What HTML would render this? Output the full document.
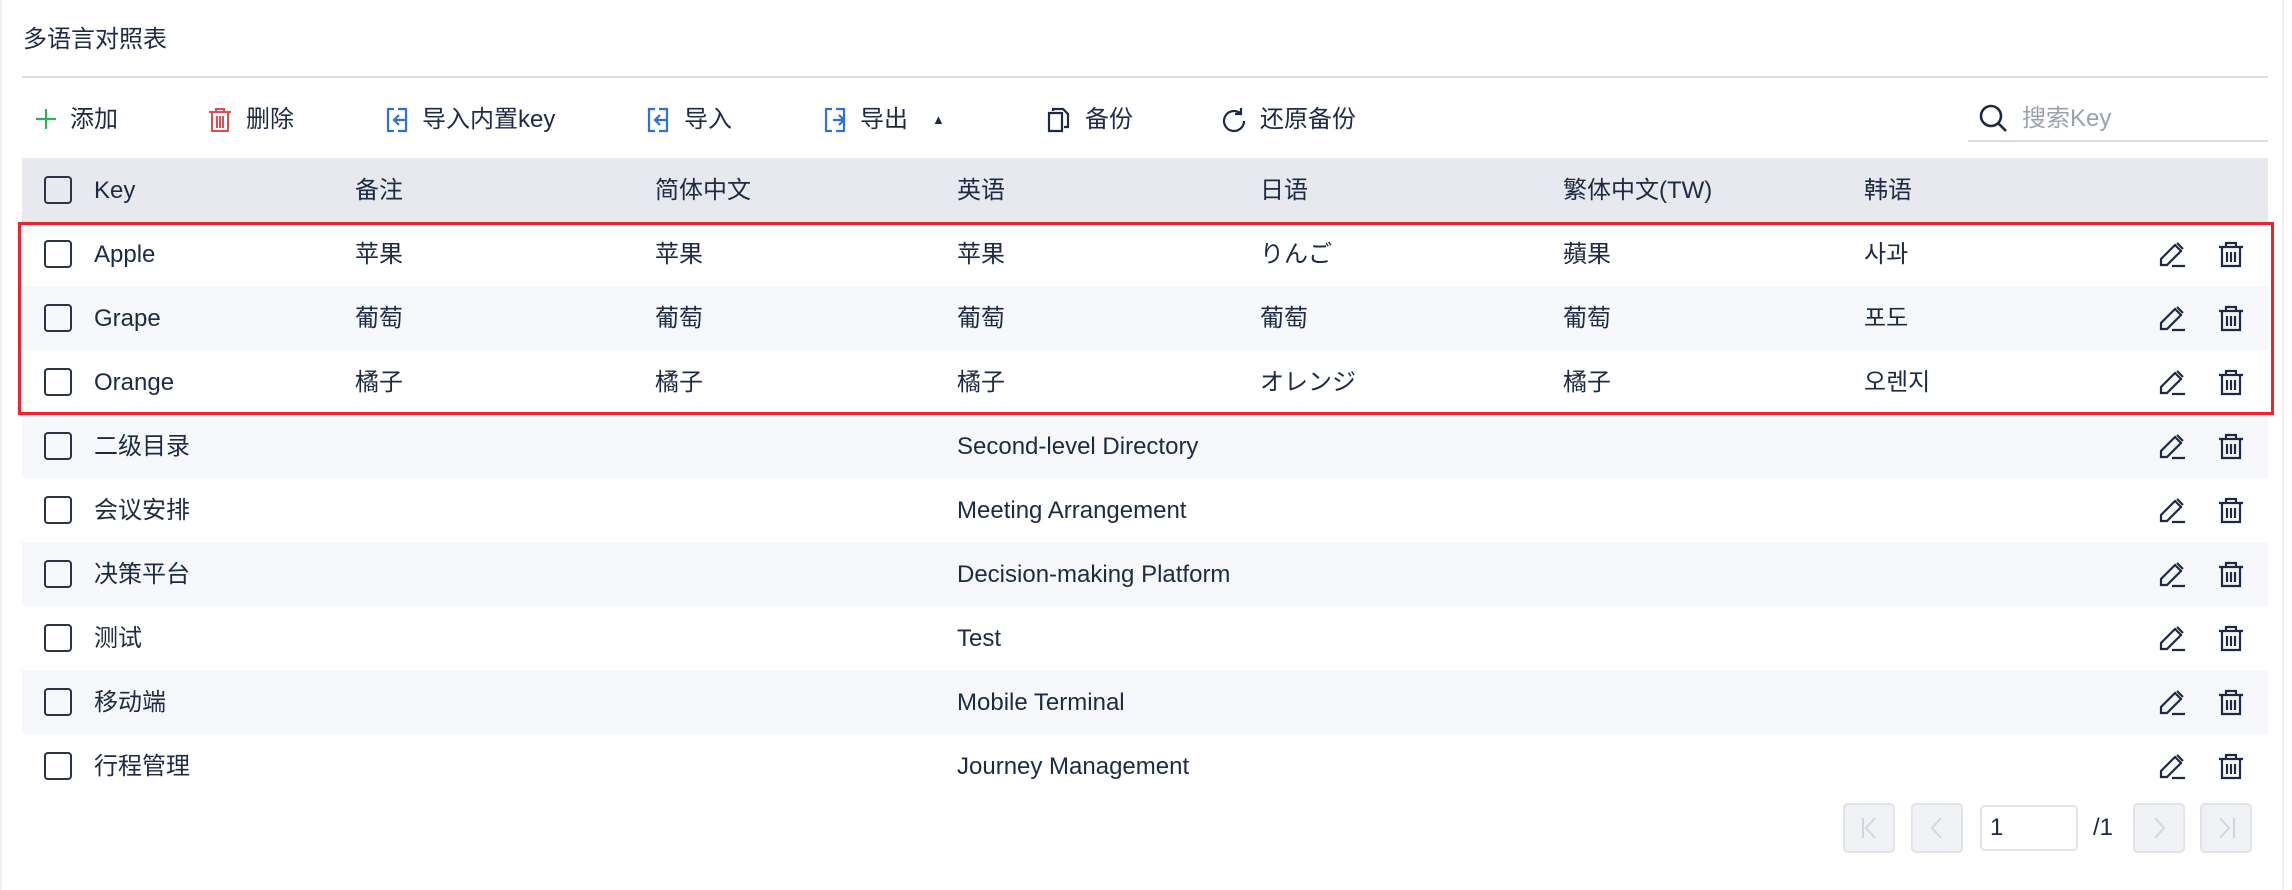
<!DOCTYPE html>
<html><head><meta charset="utf-8"><style>
*{box-sizing:border-box;margin:0;padding:0}
body{width:2292px;height:890px;background:#fff;font-family:"Liberation Sans","Noto Sans CJK SC",sans-serif;color:#1d2a44;font-size:24px;position:relative;overflow:hidden}
.abs{position:absolute}
.edge{position:absolute;top:0;bottom:0;width:2px;background:#eef0f4}
.title{left:23px;top:19px;font-size:24px}
.div{left:22px;top:76px;width:2246px;height:2px;background:#dcdde3}
.tb{top:104px;height:32px;line-height:32px;font-size:24px}
.tb svg{position:absolute;top:3px}
.search{left:1968px;top:100px;width:300px;height:42px;border-bottom:2px solid #dcdde3}
.head{left:22px;top:158px;width:2246px;height:64px;background:#e8e9ee}
.row{left:22px;width:2246px;height:64px}
.row.s{background:#f6f8fb}
.cb{position:absolute;left:22px;width:28px;height:28px;border:2px solid #2a3347;border-radius:4px}
.t{position:absolute;line-height:64px;top:1px;white-space:nowrap}
.ic{position:absolute;top:18px}
.red{left:18px;top:222px;width:2256px;height:193px;border:3px solid #f0232b}
.pb{top:803px;width:52px;height:50px;border:2px solid #e1e3ea;border-radius:5px;background:#f1f2f6}
</style></head><body>
<div class="edge" style="left:0"></div>
<div class="edge" style="left:2282px"></div>
<div class="abs title">多语言对照表</div>
<div class="abs div"></div>

<div class="abs tb" style="left:35px;width:30px"><svg width="22" height="24" viewBox="0 0 22 24"><path d="M11 2v20M1 12h20" stroke="#2fb35a" stroke-width="2.2"/></svg></div>
<div class="abs tb" style="left:70px">添加</div>
<div class="abs tb" style="left:207px;width:30px"><svg width="26" height="26" viewBox="0 0 26 26" fill="none" stroke="#e5484d" stroke-width="2"><path d="M2 5h22M9 5V2h8v3M5 5v19h16V5M10 9v12M13 9v12M16 9v12"/></svg></div>
<div class="abs tb" style="left:246px">删除</div>
<div class="abs tb" style="left:385px;width:30px"><svg width="28" height="26" viewBox="0 0 28 26" fill="none" stroke="#2f6fe0" stroke-width="2.2"><path d="M9 2H3v22h6M13 2h8v22h-8M20 13h-10M14 8l-5 5 5 5"/></svg></div>
<div class="abs tb" style="left:422px">导入内置key</div>
<div class="abs tb" style="left:646px;width:30px"><svg width="28" height="26" viewBox="0 0 28 26" fill="none" stroke="#2f6fe0" stroke-width="2.2"><path d="M9 2H3v22h6M13 2h8v22h-8M20 13h-10M14 8l-5 5 5 5"/></svg></div>
<div class="abs tb" style="left:684px">导入</div>
<div class="abs tb" style="left:823px;width:30px"><svg width="28" height="26" viewBox="0 0 28 26" fill="none" stroke="#2f6fe0" stroke-width="2.2"><path d="M9 2H3v22h6M13 2h8v22h-8M10 13h10M16 8l5 5-5 5"/></svg></div>
<div class="abs tb" style="left:860px">导出</div>
<div class="abs tb" style="left:932px;font-size:13px">▲</div>
<div class="abs tb" style="left:1046px;width:30px"><svg width="26" height="26" viewBox="0 0 26 26" fill="none" stroke="#1d2a44" stroke-width="2.2"><path d="M7 4V2h10l5 5v13h-4M3 6h13v18H3z"/></svg></div>
<div class="abs tb" style="left:1085px">备份</div>
<div class="abs tb" style="left:1220px;width:30px"><svg width="28" height="28" viewBox="0 0 28 28" fill="none" stroke="#1d2a44" stroke-width="2.2"><path d="M24 14a10 10 0 1 1-4-8M21 1v6h-6"/></svg></div>
<div class="abs tb" style="left:1260px">还原备份</div>

<div class="abs search"><svg style="position:absolute;left:11px;top:4px" width="30" height="30" viewBox="0 0 30 30" fill="none" stroke="#1d2a44" stroke-width="2.6"><circle cx="12" cy="12" r="10"/><path d="M19 19l8 8"/></svg><span style="position:absolute;left:54px;top:-2px;color:#9aa1b1;font-size:24px">搜索Key</span></div>

<div class="abs head">
<div class="cb" style="top:18px"></div>
<div class="t" style="left:72px">Key</div><div class="t" style="left:333px">备注</div><div class="t" style="left:633px">简体中文</div><div class="t" style="left:935px">英语</div><div class="t" style="left:1238px">日语</div><div class="t" style="left:1541px">繁体中文(TW)</div><div class="t" style="left:1842px">韩语</div>
</div>

<div class="abs row" style="top:222px"><div class="cb" style="top:18px"></div><div class="t" style="left:72px">Apple</div><div class="t" style="left:333px">苹果</div><div class="t" style="left:633px">苹果</div><div class="t" style="left:935px">苹果</div><div class="t" style="left:1238px">りんご</div><div class="t" style="left:1541px">蘋果</div><div class="t" style="left:1842px">사과</div>ICONS</div>
<div class="abs row s" style="top:286px"><div class="cb" style="top:18px"></div><div class="t" style="left:72px">Grape</div><div class="t" style="left:333px">葡萄</div><div class="t" style="left:633px">葡萄</div><div class="t" style="left:935px">葡萄</div><div class="t" style="left:1238px">葡萄</div><div class="t" style="left:1541px">葡萄</div><div class="t" style="left:1842px">포도</div>ICONS</div>
<div class="abs row" style="top:350px"><div class="cb" style="top:18px"></div><div class="t" style="left:72px">Orange</div><div class="t" style="left:333px">橘子</div><div class="t" style="left:633px">橘子</div><div class="t" style="left:935px">橘子</div><div class="t" style="left:1238px">オレンジ</div><div class="t" style="left:1541px">橘子</div><div class="t" style="left:1842px">오렌지</div>ICONS</div>
<div class="abs row s" style="top:414px"><div class="cb" style="top:18px"></div><div class="t" style="left:72px">二级目录</div><div class="t" style="left:935px">Second-level Directory</div>ICONS</div>
<div class="abs row" style="top:478px"><div class="cb" style="top:18px"></div><div class="t" style="left:72px">会议安排</div><div class="t" style="left:935px">Meeting Arrangement</div>ICONS</div>
<div class="abs row s" style="top:542px"><div class="cb" style="top:18px"></div><div class="t" style="left:72px">决策平台</div><div class="t" style="left:935px">Decision-making Platform</div>ICONS</div>
<div class="abs row" style="top:606px"><div class="cb" style="top:18px"></div><div class="t" style="left:72px">测试</div><div class="t" style="left:935px">Test</div>ICONS</div>
<div class="abs row s" style="top:670px"><div class="cb" style="top:18px"></div><div class="t" style="left:72px">移动端</div><div class="t" style="left:935px">Mobile Terminal</div>ICONS</div>
<div class="abs row" style="top:734px"><div class="cb" style="top:18px"></div><div class="t" style="left:72px">行程管理</div><div class="t" style="left:935px">Journey Management</div>ICONS</div>

<div class="abs red"></div>

<div class="abs pb" style="left:1843px"><svg width="48" height="46" viewBox="0 0 48 46" fill="none" stroke="#d3d6de" stroke-width="2"><path d="M18 13v20M30 13l-9 10 9 10"/></svg></div>
<div class="abs pb" style="left:1911px"><svg width="48" height="46" viewBox="0 0 48 46" fill="none" stroke="#d3d6de" stroke-width="2"><path d="M28 13l-9 10 9 10"/></svg></div>
<div class="abs" style="left:1980px;top:805px;width:98px;height:46px;border:2px solid #e1e3ea;border-radius:5px;padding-left:8px;line-height:42px;font-size:24px">1</div>
<div class="abs" style="left:2093px;top:805px;line-height:46px;font-size:24px">/1</div>
<div class="abs pb" style="left:2133px"><svg width="48" height="46" viewBox="0 0 48 46" fill="none" stroke="#d3d6de" stroke-width="2"><path d="M20 13l9 10-9 10"/></svg></div>
<div class="abs pb" style="left:2200px"><svg width="48" height="46" viewBox="0 0 48 46" fill="none" stroke="#d3d6de" stroke-width="2"><path d="M18 13l9 10-9 10M32 13v20"/></svg></div>

<script>
var ic='<svg class="ic" style="left:2136px" width="30" height="28" viewBox="0 0 30 28" fill="none" stroke="#1d2a44" stroke-width="2.2"><path d="M3 25V19L17 5l6 6L9 25zM19 3l6 6M14 26h13"/></svg><svg class="ic" style="left:2195px" width="28" height="28" viewBox="0 0 28 28" fill="none" stroke="#1d2a44" stroke-width="2.2"><path d="M2 7h24M9 7V3h10v4M5 7v19h18V7M10 12v10M14 12v10M18 12v10"/></svg>';
document.body.innerHTML=document.body.innerHTML.split('ICONS').join(ic);
</script>
</body></html>
